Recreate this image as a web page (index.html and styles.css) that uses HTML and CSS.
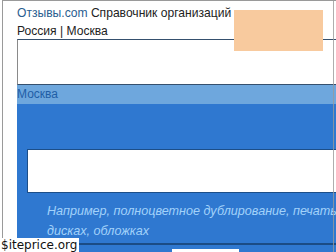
FILE: index.html
```html
<!DOCTYPE html>
<html lang="ru">
<head>
<meta charset="utf-8">
<link rel="stylesheet" href="styles.css">
</head>
<body>
<div class="frame">
  <div class="head">
    <div class="title"><span class="brand">Отзывы.com</span> Справочник организаций</div>
    <div class="loc">Россия | Москва</div>
  </div>
  <div class="topbox"></div>
  <div class="band">Москва</div>
  <div class="panel">
    <div class="field"></div>
    <div class="hint">Например, полноцветное дублирование, печать на дисках, обложках</div>
  </div>
  <div class="foot"><span class="btn"></span></div>
</div>
<div class="redact"></div>
<div class="mark">$iteprice.org</div>
</body>
</html>
```
FILE: styles.css
```css
html, body { margin: 0; padding: 0; background: #fff; overflow: hidden; }
body { width: 336px; height: 252px; position: relative; font-family: "Liberation Sans", Arial, sans-serif; }
.frame {
  position: relative;
  margin-left: 2px;
  border-left: 1px solid #9a9a9a;
  border-top: 1px solid #9a9a9a;
  padding-left: 14px;
  height: 251px;
  overflow: hidden;
}
.frame::after {
  content: "";
  position: absolute;
  top: 0; bottom: 0; right: 2px;
  width: 1px;
  background: #9a9a9a;
  opacity: 0.8;
}
.head { padding-top: 4px; font-size: 12.1px; color: #222; }
.title { height: 18px; line-height: 16px; white-space: nowrap; }
.brand { color: #2a5d8f; }
.loc { height: 16px; line-height: 16px; }
.topbox {
  height: 44px;
  border-top: 1px solid #35506e;
  border-left: 1px solid #8a8a8a;
  border-bottom: 1px solid #35506e;
  background: #fff;
}
.band {
  height: 19px;
  line-height: 18px;
  background: #6ea7dd;
  color: #1f5ea6;
  font-size: 12px;
}
.panel {
  background: #2f78d0;
  padding: 45px 0 2px 10px;
}
.field {
  height: 42px;
  background: #fff;
  border: 1px solid #1c4e88;
  border-right: none;
}
.hint {
  padding: 8px 0 0 20px;
  font-style: italic;
  font-size: 12.6px;
  line-height: 20px;
  color: #a2d2fa;
  width: 326px;
  height: 40px;
}
.foot {
  border-top: 2px solid #1b4c85;
  background: #2f78d0;
  height: 20px;
  padding-left: 155px;
  padding-top: 4px;
}
.btn { display: block; width: 67px; height: 20px; background: #fff; }
.redact {
  position: absolute;
  left: 234px; top: 10px;
  width: 89px; height: 41px;
  background: #f8ca9e;
}
.mark {
  position: absolute;
  left: 0; bottom: 0;
  background: #fff;
  color: #111;
  font-family: "DejaVu Sans", sans-serif;
  font-size: 12px;
  line-height: 14px;
  padding: 0 2px 0 1px;
}
```
